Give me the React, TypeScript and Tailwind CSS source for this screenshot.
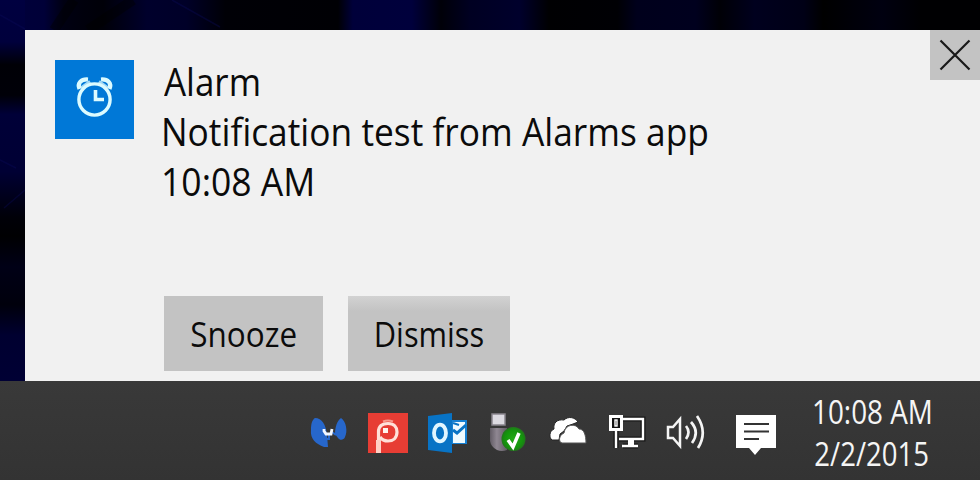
import React from "react";

function Wallpaper() {
  return (
    <svg className="absolute inset-0" width="980" height="381" viewBox="0 0 980 381" aria-hidden="true">
      <defs>
        <linearGradient id="top" x1="0" x2="1" y1="0" y2="0">
          <stop offset="0" stopColor="#00003c" />
          <stop offset="0.045" stopColor="#000038" />
          <stop offset="0.065" stopColor="#000012" />
          <stop offset="0.085" stopColor="#00000c" />
          <stop offset="0.105" stopColor="#000008" />
          <stop offset="0.15" stopColor="#00002c" />
          <stop offset="0.19" stopColor="#000028" />
          <stop offset="0.23" stopColor="#000006" />
          <stop offset="0.345" stopColor="#000004" />
          <stop offset="0.36" stopColor="#00003a" />
          <stop offset="0.42" stopColor="#00003c" />
          <stop offset="0.45" stopColor="#000008" />
          <stop offset="0.48" stopColor="#000022" />
          <stop offset="0.53" stopColor="#00002c" />
          <stop offset="0.56" stopColor="#000002" />
          <stop offset="0.63" stopColor="#000004" />
          <stop offset="0.65" stopColor="#00001c" />
          <stop offset="0.71" stopColor="#00001e" />
          <stop offset="0.735" stopColor="#000006" />
          <stop offset="0.77" stopColor="#00001e" />
          <stop offset="0.82" stopColor="#000016" />
          <stop offset="0.84" stopColor="#000000" />
          <stop offset="0.9" stopColor="#000010" />
          <stop offset="0.94" stopColor="#000002" />
          <stop offset="1" stopColor="#000002" />
        </linearGradient>
        <linearGradient id="side" x1="0" x2="0" y1="0" y2="1">
          <stop offset="0" stopColor="#000040" />
          <stop offset="0.11" stopColor="#00003c" />
          <stop offset="0.17" stopColor="#000006" />
          <stop offset="0.25" stopColor="#000008" />
          <stop offset="0.3" stopColor="#000038" />
          <stop offset="0.45" stopColor="#000034" />
          <stop offset="0.57" stopColor="#000008" />
          <stop offset="0.62" stopColor="#000002" />
          <stop offset="0.7" stopColor="#000016" />
          <stop offset="0.8" stopColor="#00000c" />
          <stop offset="0.88" stopColor="#000030" />
          <stop offset="1" stopColor="#000034" />
        </linearGradient>
      </defs>
      <rect width="980" height="30" fill="url(#top)" />
      <rect width="25" height="381" fill="url(#side)" />
      <path d="M0 15 25 29M172 0 220 27M0 160 16 168M4 208 25 190" stroke="#0c0c5c" strokeWidth="1.5" opacity=".35" />
      <path d="M74 0 54 30M133 0 88 30" stroke="#000" strokeWidth="10" opacity=".4" />
    </svg>
  );
}

function AlarmIcon() {
  return (
    <svg width="79" height="79" viewBox="55 60 79 79" fill="none" stroke="#dcfbff" aria-hidden="true">
      <circle cx="94.5" cy="99.5" r="15.6" strokeWidth="3.4" />
      <path d="M95.5 90V99.5H104" strokeWidth="3.6" />
      <path d="M79.5 89C77 83 81 79 88 79.5M101 79.5C108 79 112 83 109.5 89" strokeWidth="4.2" />
      <path d="M81 88 90 81.5M108 88 99 81.5" strokeWidth="3" opacity=".75" />
    </svg>
  );
}

function MalwareIcon() {
  return (
    <svg width="40" height="40" viewBox="0 0 40 40" aria-hidden="true">
      <path d="M5 1C12 1 16 8 17 18L18 30H14C6 27 0 22 1 13C1 7 2 3 5 1Z" fill="#2767cb" />
      <path d="M31 1C36 4 38 14 35 20C34 23 30 24 28 21L25 17C25 10 27 4 31 1Z" fill="#2767cb" />
      <path d="M16 16V22H19V17M22 15 26 18" fill="none" stroke="#2767cb" strokeWidth="2" />
      <path d="M14 12V14L16 17H21L22 12" fill="none" stroke="#f3f7ff" strokeWidth="2.8" />
    </svg>
  );
}

function PeriscopeIcon() {
  return (
    <svg width="40" height="40" viewBox="0 0 40 40" aria-hidden="true">
      <rect width="40" height="40" fill="#e73d34" />
      <path d="M10.5 40V19C10.5 13 14 10.5 20 10.5C26 10.5 29 14 29 19C29 25 25 28 20 28C16 28 14 27 12 24" fill="none" stroke="#ffe1d9" strokeWidth="3.2" />
      <path d="M15 8.5Q20 6.5 25 8.5" fill="none" stroke="#f79a8c" strokeWidth="2" />
      <path d="M10.5 40V27" stroke="#ffd0c5" strokeWidth="5" />
      <rect x="15" y="15" width="5" height="5" fill="#fff4ed" />
    </svg>
  );
}

function OutlookIcon() {
  return (
    <svg width="40" height="40" viewBox="0 0 40 40" aria-hidden="true">
      <path d="M0 3 24 0V40L0 37Z" fill="#0873c5" />
      <rect x="24" y="7" width="15" height="24" fill="#1680d2" />
      <path d="M25 9H37V30H25Z" fill="#eefaff" />
      <path d="M25 17 29 20 38 12" fill="none" stroke="#0873c5" strokeWidth="3" />
      <path d="M25 10 31 12" stroke="#0873c5" strokeWidth="2" />
      <ellipse cx="12" cy="20" rx="6" ry="8.3" fill="none" stroke="#e1f6ff" strokeWidth="3.8" />
    </svg>
  );
}

function UsbIcon() {
  return (
    <svg width="40" height="42" viewBox="0 0 40 42" aria-hidden="true">
      <defs>
        <linearGradient id="usb"><stop stopColor="#625c65" /><stop offset=".4" stopColor="#8f8792" /><stop offset="1" stopColor="#625c65" /></linearGradient>
        <radialGradient id="ok"><stop stopColor="#22a915" /><stop offset=".75" stopColor="#13940c" /><stop offset="1" stopColor="#22751c" /></radialGradient>
      </defs>
      <path d="M2 15H19V37Q14 39 9 37Q3 34 2 28Z" fill="url(#usb)" />
      <rect x="4" y="1" width="13" height="11" fill="#dcdae1" stroke="#89858d" strokeWidth="1.5" />
      <circle cx="25.5" cy="26" r="12" fill="url(#ok)" />
      <path d="M20 27 25 34 31 20" fill="none" stroke="#fff" strokeWidth="3.5" />
    </svg>
  );
}

function CloudIcon() {
  return (
    <svg width="40" height="34" viewBox="0 0 40 34" aria-hidden="true">
      <path d="M3 26C0 24 0 17 5 15C4 9 8 5 15 6C19 2 26 3 29 8L24 10L18 12L15 17L11 20L10 26Z" fill="#fff" stroke="#252525" strokeWidth="1" />
      <path d="M13 29C9 28 10 21 15 19C16 10 27 9 30 15C35 15 37 21 37 29Z" fill="#fff" stroke="#555" strokeWidth="1" />
    </svg>
  );
}

function NetworkIcon() {
  return (
    <svg width="38" height="36" viewBox="0 0 38 36" aria-hidden="true">
      <path d="M14 5H34V25H10M22 25V32M14 32H29M7 17V34" fill="none" stroke="#171717" strokeWidth="5" />
      <path d="M14 5H34V25H10M13 32H29M7 17V34" fill="none" stroke="#fff" strokeWidth="2.4" />
      <path d="M19 26H25V33H19Z" fill="#fff" />
      <rect x="1.5" y="2.5" width="11" height="13" fill="#111" stroke="#fff" strokeWidth="3" />
      <rect x="6" y="6" width="2" height="6" fill="none" stroke="#fff" strokeWidth="1.4" />
    </svg>
  );
}

function VolumeIcon() {
  return (
    <svg width="42" height="36" viewBox="0 0 42 36" fill="none" stroke="#f5f5f5" aria-hidden="true">
      <path d="M2 12H7L14 4V31L7 23H2Z" strokeWidth="2.5" />
      <path d="M20 11Q25 17 20 24M25 7Q34 17 26 28M31 1Q42 17 32 33" strokeWidth="2.7" />
    </svg>
  );
}

function MessageIcon() {
  return (
    <svg width="40" height="41" viewBox="0 0 40 41" aria-hidden="true">
      <path d="M0 0H40V33H25L19 40 13 33H0Z" fill="#fff" />
      <path d="M8 9H33M8 16.5H33M8 24H23" stroke="#333" strokeWidth="2.2" />
    </svg>
  );
}

export default function App() {
  return (
    <main className="relative flex h-[480px] w-[980px] flex-col overflow-hidden bg-black font-['Open_Sans',sans-serif]">
      <Wallpaper />
      <section className="relative mt-[30px] ml-[25px] flex h-[351px] shrink-0 bg-[#f1f1f1]">
        <div className="mt-[30px] ml-[30px] h-[79px] w-[79px] shrink-0 bg-[#0078d7]">
          <AlarmIcon />
        </div>
        <div className="ml-[30px] flex w-[600px] flex-col pt-[26px] whitespace-nowrap text-[#0b0b0b]">
          <h1 className="h-[50px] origin-left scale-x-[0.92] text-[38px] leading-[50px]">Alarm</h1>
          <p className="-ml-[3px] h-[50px] origin-left scale-x-[0.93] text-[38px] leading-[50px]">Notification test from Alarms app</p>
          <p className="-ml-[3px] h-[50px] origin-left scale-x-[0.935] text-[38px] leading-[50px]">10:08 AM</p>
          <div className="mt-[90px] flex gap-[25px]">
            <button className="flex h-[75px] w-[159px] items-center justify-center bg-[#c3c3c3] pt-[2px] text-[34px]">
              <span className="scale-x-[0.925]">Snooze</span>
            </button>
            <button className="flex h-[75px] w-[162px] items-center justify-center bg-linear-to-b from-[#d2d2d2] to-[#c3c3c3] to-20% pt-[2px] text-[34px]">
              <span className="scale-x-[0.905]">Dismiss</span>
            </button>
          </div>
        </div>
        <button aria-label="Close" className="ml-auto flex h-[50px] w-[50px] items-center justify-center bg-[#c3c3c3]">
          <svg width="50" height="50" viewBox="0 0 50 50"><path d="M10.5 10.5 39.5 39.5M39.5 10.5 10.5 39.5" stroke="#191919" strokeWidth="2.2" /></svg>
        </button>
      </section>
      <footer className="relative flex h-[99px] shrink-0 bg-linear-to-b from-[#393939] to-[#333333]">
        <div className="mt-[32px] ml-[310px] flex w-[466px] items-start">
          <div className="mt-[4px] w-[58px]"><MalwareIcon /></div>
          <div className="w-[60px]"><PeriscopeIcon /></div>
          <div className="w-[60px]"><OutlookIcon /></div>
          <div className="w-[61px]"><UsbIcon /></div>
          <div className="mt-[1px] w-[60px]"><CloudIcon /></div>
          <div className="mt-[1px] w-[57px]"><NetworkIcon /></div>
          <div className="mt-[2px] w-[70px]"><VolumeIcon /></div>
          <div className="mt-[2px] w-[40px]"><MessageIcon /></div>
        </div>
        <div className="ml-[16px] flex w-[160px] flex-col items-center pt-[10px] whitespace-nowrap text-[32px] leading-[42px] text-[#f5f5f5]">
          <span className="scale-x-[0.87]">10:08 AM</span>
          <span className="scale-x-[0.86]">2/2/2015</span>
        </div>
      </footer>
    </main>
  );
}
